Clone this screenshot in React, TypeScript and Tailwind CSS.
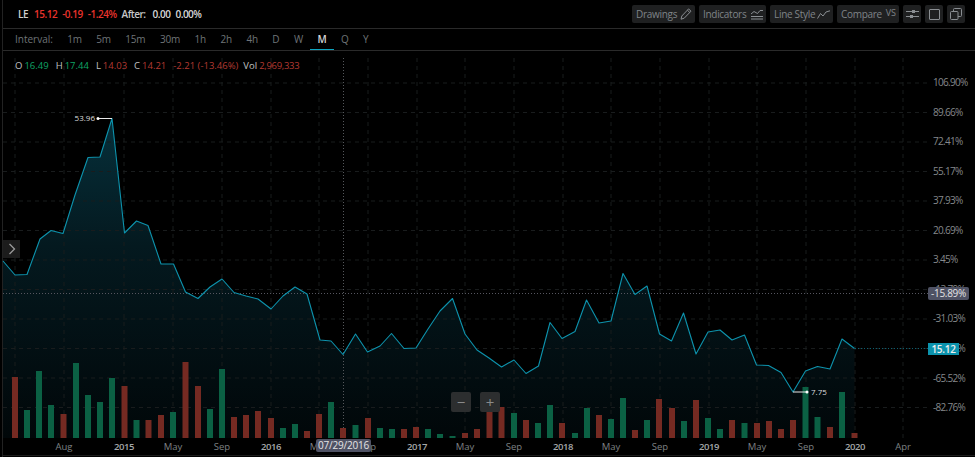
import React from 'react';

const line: [number, number][] = [
  [3, 261], [15, 275], [27, 274.5], [40, 239], [51, 230.5], [63, 233.5], [75, 195], [88, 157.5], [100, 157], [112, 118.5],
  [124.5, 233], [136.5, 221], [148, 225.5], [161, 264], [173.5, 264], [185.5, 292], [198, 298.5], [210, 287], [222, 279],
  [234, 292.5], [246, 296], [258, 299], [271, 309], [283, 296], [295, 287], [307, 294], [320, 340], [331, 341], [343, 354.5],
  [355.5, 334], [367.5, 352], [380, 346], [391.5, 333.5], [404, 348.5], [416, 348], [428, 329], [440, 311], [452.5, 298.5],
  [465, 334], [477, 350], [489, 358], [501.5, 367], [514, 360], [526, 373.5], [538.5, 366], [550, 322.5], [562, 338.5],
  [575, 331.5], [586.5, 300], [599, 323], [611, 321], [623, 273.5], [635, 294.5], [647, 286], [659.5, 334], [671.5, 341],
  [683.5, 313], [696, 354], [708, 332], [720, 330], [732, 340], [744.5, 335], [756.5, 365], [768.5, 365.5], [781, 372.5],
  [793, 392], [805.5, 371], [817.5, 366.5], [830, 369], [842, 339], [854.5, 348.5],
];

// x, top of bar, r/g
const bars: [number, number, string][] = [
  [15, 377, 'r'], [27, 410, 'g'], [39, 371, 'g'], [51, 405, 'g'], [63.5, 414, 'r'], [76, 363, 'g'], [88, 395, 'g'], [100, 402, 'g'],
  [112, 378, 'g'], [124.5, 386, 'r'], [136.5, 420, 'g'], [148.5, 420, 'r'], [161, 415, 'r'], [173, 412, 'g'], [185.5, 362, 'r'],
  [198, 386, 'r'], [210, 409, 'g'], [222, 369, 'g'], [234, 417, 'r'], [246, 415, 'r'], [258, 411, 'r'], [271, 418, 'r'],
  [283, 428, 'g'], [295, 424, 'g'], [307, 431, 'r'], [319, 414, 'r'], [331, 402, 'g'], [343, 428, 'r'], [355.5, 425, 'g'],
  [368, 418, 'r'], [380, 428, 'g'], [392, 429, 'g'], [404, 429, 'r'], [416, 427, 'r'], [428, 429, 'g'], [440, 434, 'g'],
  [452.5, 436, 'g'], [465, 433, 'r'], [477, 429, 'r'], [489.5, 410, 'r'], [501.5, 407, 'r'], [514, 413, 'g'], [526, 420, 'r'],
  [538, 423, 'g'], [550, 405, 'g'], [562, 423, 'r'], [575, 433, 'g'], [587, 408, 'g'], [599, 415, 'r'], [611, 419, 'g'],
  [623, 398, 'g'], [635, 430, 'r'], [647, 420, 'g'], [659, 399, 'r'], [672, 408, 'r'], [684, 421, 'g'], [696, 400, 'r'],
  [708, 418, 'g'], [720, 429, 'g'], [732, 420, 'r'], [744.5, 423, 'g'], [757, 423, 'r'], [769, 421, 'r'], [781, 429, 'r'],
  [793, 420, 'r'], [805.5, 387, 'g'], [817.5, 417, 'g'], [830, 427, 'r'], [842, 392, 'g'], [854.5, 433, 'r'],
];

const gridX = [15, 64, 124, 173, 222, 271, 319, 368, 417, 465, 514, 563, 611, 660, 709, 757, 806, 855, 903];
const gridY = [83, 112.5, 142, 171.5, 201, 230.5, 260, 289.5, 319, 348.5, 378, 407.5];
const yLabels: [string, number][] = [
  ['106.90%', 82], ['89.66%', 112], ['72.41%', 141], ['55.17%', 171], ['37.93%', 200.5], ['20.69%', 230], ['3.45%', 259.5],
  ['-13.79%', 289], ['-31.03%', 318.5], ['-48.28%', 348], ['-65.52%', 378], ['-82.76%', 407.5],
];
const xLabels: [string, number, boolean][] = [
  ['Aug', 64, false], ['2015', 124, true], ['May', 173, false], ['Sep', 222, false], ['2016', 271, true], ['May', 319, false],
  ['Sep', 368, false], ['2017', 417, true], ['May', 465, false], ['Sep', 514, false], ['2018', 563, true], ['May', 611, false],
  ['Sep', 660, false], ['2019', 709, true], ['May', 757, false], ['Sep', 806, false], ['2020', 855, true], ['Apr', 903, false],
];
const intervals = ['1m', '5m', '15m', '30m', '1h', '2h', '4h', 'D', 'W', 'M', 'Q', 'Y'];

const points = line.map((p) => p.join(',')).join(' ');
const area = `3,438 ${points} 854.5,438`;

function ToolButton({ label, width, children }: { label: string; width: string; children: React.ReactNode }) {
  return (
    <div className={`${width} h-[18px] pl-[4px] pr-[3px] flex items-center justify-between whitespace-nowrap rounded-[2px] bg-[#1f2021] text-[10px] font-medium tracking-[-0.3px] text-[#7f8488]`}>
      <span>{label}</span>
      {children}
    </div>
  );
}

function IconButton({ children }: { children: React.ReactNode }) {
  return <div className="w-[18px] h-[18px] flex items-center justify-center rounded-[2px] bg-[#1f2021]">{children}</div>;
}

function Chart() {
  return (
    <svg viewBox="0 51 975 406" className="block w-[975px] h-[406px]" style={{ fontFamily: '"Open Sans", sans-serif' }}>
      <defs>
        <linearGradient id="fade" gradientUnits="userSpaceOnUse" x1="0" y1="118" x2="0" y2="438">
          <stop offset="0" stopColor="#06303b" />
          <stop offset="0.4" stopColor="#04191f" />
          <stop offset="1" stopColor="#010709" />
        </linearGradient>
      </defs>
      <polygon points={area} fill="url(#fade)" />
      {gridX.map((x) => (
        <line key={x} x1={x} x2={x} y1="58" y2="438" stroke="#191c1d" strokeDasharray="4 4" />
      ))}
      {gridY.map((y) => (
        <line key={y} x1="3" x2="928" y1={y} y2={y} stroke="#191c1d" strokeDasharray="4 4" />
      ))}
      <line x1="343.5" x2="343.5" y1="58" y2="438" stroke="#55585c" strokeDasharray="1 2" />
      <line x1="3" x2="928" y1="293.5" y2="293.5" stroke="#55555f" strokeDasharray="1 2" />
      <line x1="855" x2="928" y1="348.5" y2="348.5" stroke="#0c5f70" strokeDasharray="1 2" />
      {bars.map(([x, top, c]) => (
        <rect key={x} x={x - 3} y={top} width="6" height={438 - top} fill={c === 'r' ? '#752a22' : '#0b6144'} />
      ))}
      <polyline points={points} fill="none" stroke="#0d93ad" strokeWidth="1.1" strokeLinejoin="round" />
      <line x1="98" x2="112" y1="118.5" y2="118.5" stroke="#e8e8e8" />
      <circle cx="98" cy="118.5" r="1.5" fill="#ffffff" />
      <text x="95" y="121" textAnchor="end" fontSize="8" fontWeight="500" fill="#dddddd">53.96</text>
      <line x1="793" x2="807" y1="392" y2="392" stroke="#e8e8e8" />
      <circle cx="807" cy="392" r="1.5" fill="#ffffff" />
      <text x="811" y="395" fontSize="8" fontWeight="500" fill="#dddddd">7.75</text>
      <line x1="3" x2="975" y1="455.5" y2="455.5" stroke="#1c1c1c" />
      {yLabels.map(([t, y]) => (
        <text key={t} x="933" y={y + 3.5} fontSize="10" letterSpacing="-0.7" fill="#85888b">{t}</text>
      ))}
      {xLabels.map(([t, x, bold], i) => (
        <text key={i} x={x} y="450" textAnchor="middle" fontSize="9.5" letterSpacing={bold ? -0.4 : 0} fontWeight={bold ? 600 : 400} fill={bold ? '#a5a8aa' : '#7d8083'}>{t}</text>
      ))}
    </svg>
  );
}

export default function App() {
  return (
    <div className="w-[975px] h-[457px] overflow-hidden bg-black" style={{ fontFamily: '"Open Sans", sans-serif' }}>
      <div className="ml-[2px] h-full flex flex-col border-l border-l-[#222]">
        <header className="h-[29px] shrink-0 pl-[15px] pr-[10px] flex items-center justify-between border-b border-[#2a2a2a]">
          <div className="flex items-center gap-[5px] text-[10px] font-semibold tracking-[-0.5px]">
            <span className="text-[#d0d0d0] mr-[1px]">LE</span>
            <span className="text-[#e8332c]">15.12</span>
            <span className="text-[#e8332c]">-0.19</span>
            <span className="text-[#e8332c]">-1.24%</span>
            <span className="text-[#c8c8c8] mr-[2px]">After:</span>
            <span className="text-[#d8d8d8]">0.00</span>
            <span className="text-[#d8d8d8]">0.00%</span>
          </div>
          <div className="flex items-center gap-1">
            <ToolButton label="Drawings" width="w-[63px]">
              <svg width="12" height="12" viewBox="0 0 12 12" fill="none" stroke="#8a8e92"><path d="M1 11.2 L1.8 8 L8.6 0.9 L11 3.2 L4.2 10.2 Z M7.4 2.2 L9.8 4.5" /></svg>
            </ToolButton>
            <ToolButton label="Indicators" width="w-[67px]">
              <svg width="12" height="11" viewBox="0 0 12 11" fill="none" stroke="#8a8e92"><path d="M0 5 L3 2.5 L6.5 4.5 L9 1.5 L12 1.5 M0 7.5 H12 M0 10 H12" /></svg>
            </ToolButton>
            <ToolButton label="Line Style" width="w-[63px]">
              <svg width="13" height="9" viewBox="0 0 13 9" fill="none" stroke="#8a8e92"><path d="M0.5 8.5 L3.5 3.5 L6 6 L9 2 L13 0.8" /></svg>
            </ToolButton>
            <ToolButton label="Compare" width="w-[62px]">
              <span className="mb-[2px] text-[9px] tracking-normal">VS</span>
            </ToolButton>
            <IconButton>
              <svg width="13" height="10" viewBox="0 0 13 10" fill="none" stroke="#8a8e92"><path d="M0 2.5 H13 M0 7.5 H13" /><rect x="6" y="1" width="3" height="3" fill="#8a8e92" stroke="none" /><rect x="4" y="6" width="3" height="3" fill="#8a8e92" stroke="none" /></svg>
            </IconButton>
            <IconButton>
              <div className="w-[11px] h-[11px] border border-[#8a8e92] rounded-[1px]" />
            </IconButton>
            <IconButton>
              <svg width="12" height="12" viewBox="0 0 12 12" fill="none" stroke="#8a8e92"><rect x="0.5" y="3.5" width="7.5" height="8" rx="1" /><path d="M3.5 3.5 V1.5 a1 1 0 0 1 1-1 H10.5 a1 1 0 0 1 1 1 V7.5 a1 1 0 0 1-1 1 H8" /></svg>
            </IconButton>
          </div>
        </header>
        <nav className="h-[22px] shrink-0 pl-[12px] flex items-stretch border-b border-[#2a2a2a] text-[10px] text-[#6f7477]">
          <span className="mr-[7px] flex items-center">Interval:</span>
          {intervals.map((t) => (
            <span key={t} className={t === 'M' ? 'px-[7.25px] tracking-[-0.2px] flex items-center justify-center border-b border-[#0ea5c0] text-[#d5d5d5] font-semibold' : 'px-[7.25px] tracking-[-0.2px] flex items-center justify-center'}>
              {t}
            </span>
          ))}
        </nav>
        <div className="relative -ml-[3px]">
          <Chart />
          <div className="absolute left-[15px] top-[8px] flex items-center text-[9.5px] font-medium">
            <span className="text-[#c0c0c0] mr-[2px]">O</span><span className="text-[#0fa566] mr-[7px]">16.49</span>
            <span className="text-[#c0c0c0] mr-[2px]">H</span><span className="text-[#0fa566] mr-[7px]">17.44</span>
            <span className="text-[#c0c0c0] mr-[2px]">L</span><span className="text-[#b43a32] mr-[7px]">14.03</span>
            <span className="text-[#c0c0c0] mr-[2px]">C</span><span className="text-[#b43a32] mr-[7px]">14.21</span>
            <span className="text-[#b43a32] mr-[5px]">-2.21 (-13.46%)</span>
            <span className="text-[#c0c0c0] mr-[2px]">Vol</span><span className="text-[#b43a32] tracking-[-0.3px]">2,969,333</span>
          </div>
          <div className="absolute left-[3px] top-[189px] w-[17px] h-[18px] flex items-center justify-center bg-[#1c1c1c]">
            <svg width="8" height="12" viewBox="0 0 8 12" fill="none" stroke="#9a9a9a" strokeWidth="1.3"><path d="M1.5 1 L6.5 6 L1.5 11" /></svg>
          </div>
          <div className="absolute left-[451px] top-[341px] w-[20px] h-[20px] flex items-center justify-center rounded-[2px] bg-[#2c2e2f] text-[#8a8a8a] text-[15px] leading-none">−</div>
          <div className="absolute left-[480px] top-[341px] w-[20px] h-[20px] flex items-center justify-center rounded-[2px] bg-[#2c2e2f] text-[#8a8a8a] text-[15px] leading-none">+</div>
          <div className="absolute left-[316px] top-[388px] w-[55px] h-[13px] flex items-center justify-center rounded-[2px] bg-[#4f5264] text-[10px] tracking-[-0.2px] text-[#e4e4e4]">07/29/2016</div>
          <div className="absolute left-[928px] top-[236px] w-[41px] h-[13px] flex items-center justify-center rounded-[2px] bg-[#4f5264] text-[10px] font-medium tracking-[-0.3px] text-[#e4e4e4]">-15.89%</div>
          <div className="absolute left-[928px] top-[292px] w-[31px] h-[12px] flex items-center justify-center bg-[#0c93ad] text-[10px] font-semibold tracking-[-0.3px] text-[#f0f0f0]">15.12</div>
        </div>
      </div>
    </div>
  );
}
